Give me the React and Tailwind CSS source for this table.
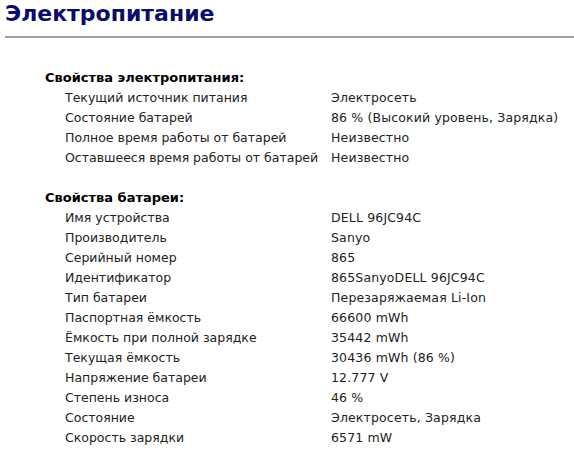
export default function App() {
  const power = [
    ["Текущий источник питания", "Электросеть"],
    ["Состояние батарей", "86 % (Высокий уровень, Зарядка)"],
    ["Полное время работы от батарей", "Неизвестно"],
    ["Оставшееся время работы от батарей", "Неизвестно"],
  ];
  const battery = [
    ["Имя устройства", "DELL 96JC94C"],
    ["Производитель", "Sanyo"],
    ["Серийный номер", "865"],
    ["Идентификатор", "865SanyoDELL 96JC94C"],
    ["Тип батареи", "Перезаряжаемая Li-Ion"],
    ["Паспортная ёмкость", "66600 mWh"],
    ["Ёмкость при полной зарядке", "35442 mWh"],
    ["Текущая ёмкость", "30436 mWh (86 %)"],
    ["Напряжение батареи", "12.777 V"],
    ["Степень износа", "46 %"],
    ["Состояние", "Электросеть, Зарядка"],
    ["Скорость зарядки", "6571 mW"],
  ];
  const Section = ({ title, rows }) => (
    <div className="flex flex-col">
      <div className="h-5 pl-[45px] text-[13px] font-bold leading-5 text-black">{title}</div>
      {rows.map(([k, v]) => (
        <div key={k} className="flex h-5 leading-5">
          <div className="w-[331px] shrink-0 pl-[65px]">{k}</div>
          <div className="tracking-[0.15px]">{v}</div>
        </div>
      ))}
    </div>
  );
  return (
    <div className="h-[460px] w-[574px] overflow-hidden bg-white text-[12.5px] text-[#222] font-['DejaVu_Sans','Verdana',sans-serif]">
      <div className="pl-[5px] text-[22px] font-bold leading-[27px] text-[#0b0b6b]">Электропитание</div>
      <div className="ml-[5px] mt-[9px] h-[2px] bg-[#a0a0a0]"></div>
      <div className="mt-[30px] flex flex-col gap-5">
        <Section title="Свойства электропитания:" rows={power} />
        <Section title="Свойства батареи:" rows={battery} />
      </div>
    </div>
  );
}
